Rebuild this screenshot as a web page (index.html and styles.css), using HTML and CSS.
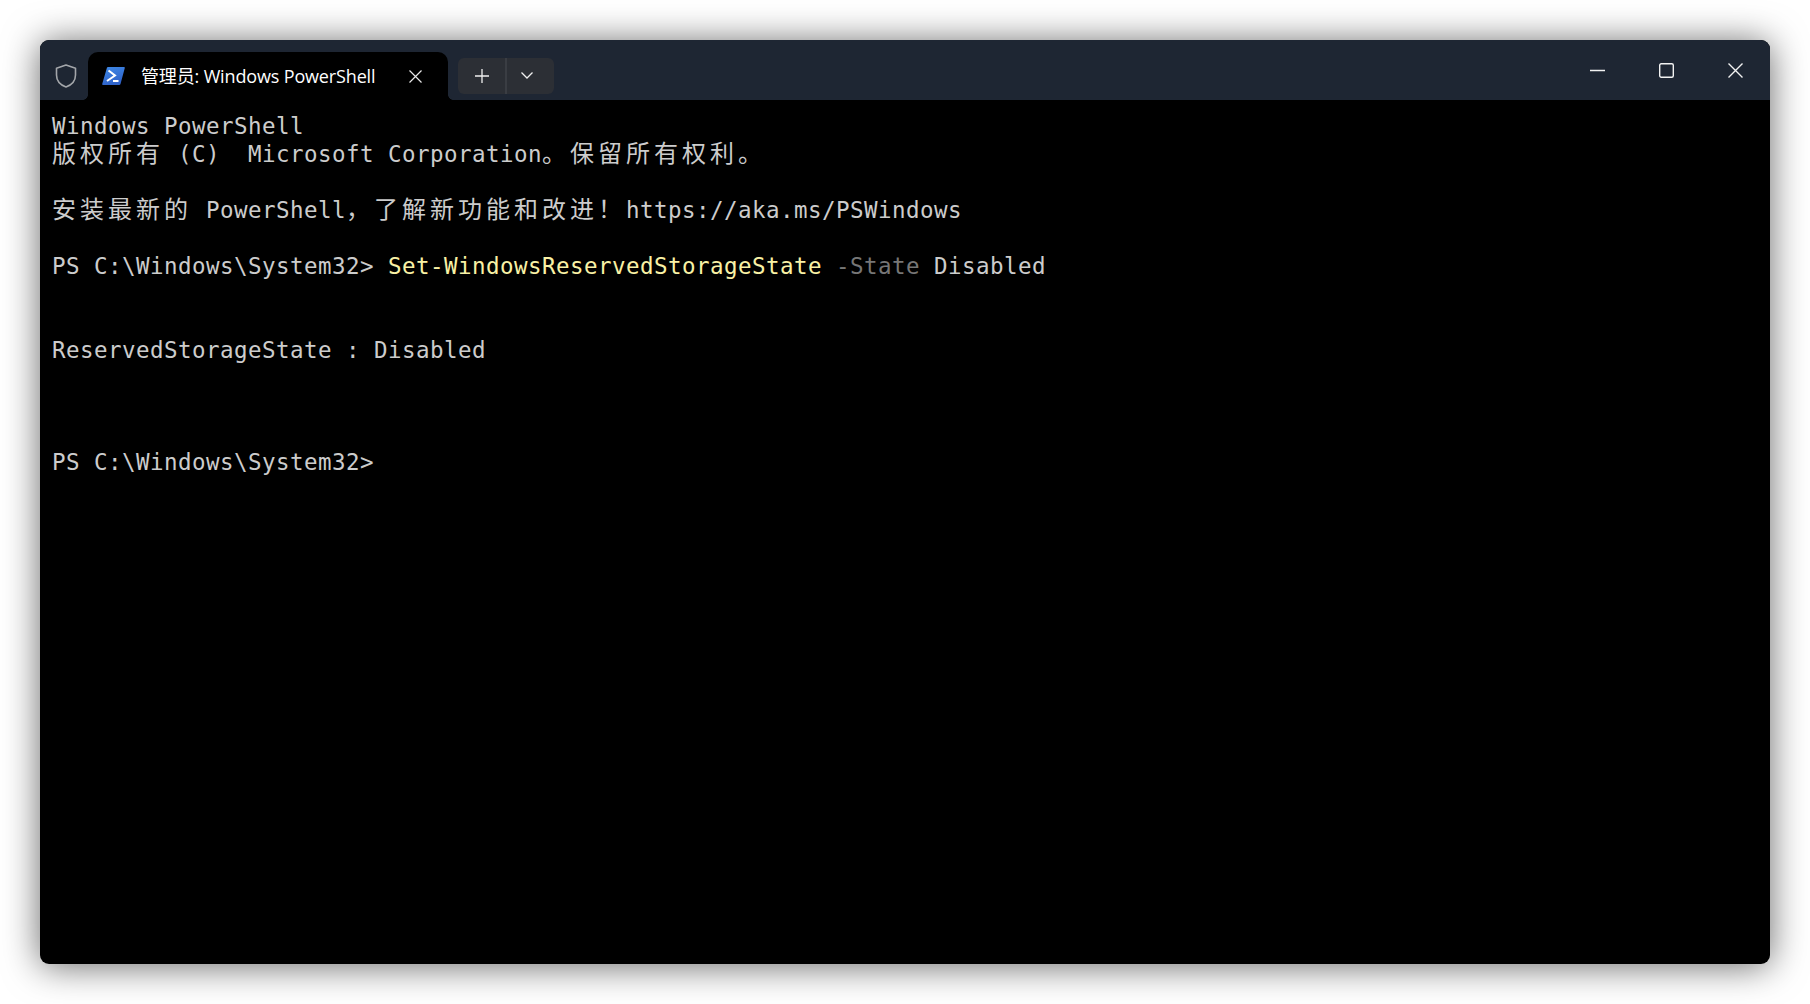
FILE: index.html
```html
<!DOCTYPE html>
<html lang="zh">
<head>
<meta charset="utf-8">
<title>管理员: Windows PowerShell</title>
<link rel="stylesheet" href="styles.css">
</head>
<body>
<div class="window">
  <div class="titlebar">
    <svg class="shield" width="22" height="24" viewBox="0 0 22 24"><path d="M11 1 L20.5 4.3 V11 C20.5 17 16.5 21 11 23 C5.5 21 1.5 17 1.5 11 V4.3 Z" fill="none" stroke="#a3a6aa" stroke-width="1.6" stroke-linejoin="round"/></svg>
    <div class="tab">
      <svg class="ps-icon" width="23" height="18" viewBox="0 0 23 18"><defs><linearGradient id="psg" x1="0" y1="0" x2="0.4" y2="1"><stop offset="0" stop-color="#3f8ae8"/><stop offset="1" stop-color="#2f62c8"/></linearGradient></defs><path d="M5 0.5 Q5.300 0 6 0 H22 Q23 0 22.800 1 L18.500 17 Q18.300 18 17 18 H1 Q0 18 0.200 17 Z" fill="url(#psg)"/><path d="M6.500 3.500 L13 8.500 L5 14" fill="none" stroke="#fff" stroke-width="2"/><path d="M11 14 H16.500" fill="none" stroke="#fff" stroke-width="2"/></svg>
      <span class="tab-title">管理员: Windows PowerShell</span>
      <svg class="tab-close" width="13" height="13" viewBox="0 0 13 13"><path d="M0.500 0.500 L12.500 12.500 M12.500 0.500 L0.500 12.500" stroke="#e8e8e8" stroke-width="1.200" fill="none"/></svg>
    </div>
    <div class="tab-actions">
      <div class="action action-new"><svg width="14" height="14" viewBox="0 0 14 14"><path d="M7 0 V14 M0 7 H14" stroke="#f0f0f0" stroke-width="1.300" fill="none"/></svg></div>
      <div class="action action-menu"><svg width="12" height="7" viewBox="0 0 12 7"><path d="M0.500 0.500 L6 6 L11.500 0.500" stroke="#f0f0f0" stroke-width="1.300" fill="none"/></svg></div>
    </div>
    <div class="controls">
      <div class="control"><svg width="15" height="15" viewBox="0 0 15 15"><path d="M0 7.500 H15" stroke="#f2f2f2" stroke-width="1.400" fill="none"/></svg></div>
      <div class="control"><svg width="15" height="15" viewBox="0 0 15 15"><rect x="0.700" y="0.700" width="13.600" height="13.600" rx="1.500" stroke="#f2f2f2" stroke-width="1.400" fill="none"/></svg></div>
      <div class="control"><svg width="15" height="15" viewBox="0 0 15 15"><path d="M0.500 0.500 L14.500 14.500 M14.500 0.500 L0.500 14.500" stroke="#f2f2f2" stroke-width="1.400" fill="none"/></svg></div>
    </div>
  </div>
  <div class="terminal">
    <div class="line">Windows PowerShell</div>
    <div class="line"><span class="cjk">版权所有</span> (C)  Microsoft Corporation<span class="cjk">。保留所有权利。</span></div>
    <div class="line"> </div>
    <div class="line"><span class="cjk">安装最新的</span> PowerShell<span class="cjk">，了解新功能和改进！</span>https://aka.ms/PSWindows</div>
    <div class="line"> </div>
    <div class="line">PS C:\Windows\System32&gt; <span class="cmd">Set-WindowsReservedStorageState</span> <span class="param">-State</span> Disabled</div>
    <div class="line"> </div>
    <div class="line"> </div>
    <div class="line">ReservedStorageState : Disabled</div>
    <div class="line"> </div>
    <div class="line"> </div>
    <div class="line"> </div>
    <div class="line">PS C:\Windows\System32&gt;</div>
  </div>
</div>
</body>
</html>
```
FILE: styles.css
```css
html, body {
  margin: 0;
  padding: 0;
  background: #fff;
}
body {
  width: 1810px;
  height: 1004px;
  padding: 40px;
  box-sizing: border-box;
  overflow: hidden;
}
.window {
  width: 1730px;
  height: 924px;
  border-radius: 9px;
  background: #000;
  overflow: clip;
  display: flex;
  flex-direction: column;
  box-shadow: 0 2px 36px rgba(0, 0, 0, 0.6);
}
.titlebar {
  height: 60px;
  flex: none;
  background: #1e2633;
  display: flex;
  align-items: flex-end;
}
.shield {
  flex: none;
  margin: 0 11px 12px 15px;
}
.tab {
  position: relative;
  width: 360px;
  height: 48px;
  flex: none;
  box-sizing: border-box;
  background: #000;
  border-radius: 10px 10px 0 0;
  display: flex;
  align-items: center;
  padding-left: 14px;
}
.tab::before,
.tab::after {
  content: "";
  position: absolute;
  bottom: 0;
  width: 5px;
  height: 5px;
}
.tab::before {
  left: -5px;
  background: radial-gradient(circle at 0 0, transparent 4.5px, #000 5px);
}
.tab::after {
  right: -5px;
  background: radial-gradient(circle at 100% 0, transparent 4.5px, #000 5px);
}
.ps-icon {
  flex: none;
}
.tab-title {
  margin-left: 16px;
  flex: none;
  color: #fff;
  font: 18px/24px "Open Sans", "Noto Sans CJK SC", sans-serif;
  letter-spacing: -0.150px;
  white-space: nowrap;
}
.tab-close {
  flex: none;
  margin-left: auto;
  margin-right: 26px;
}
.tab-actions {
  display: flex;
  height: 36px;
  margin: 0 0 6px 10px;
  background: #2c2f35;
  border-radius: 6px;
  overflow: hidden;
  flex: none;
}
.action {
  display: flex;
  align-items: center;
  justify-content: center;
  padding-bottom: 1px;
  box-sizing: border-box;
}
.action-new {
  width: 49px;
  border-right: 2px solid #3a3d43;
}
.action-menu {
  width: 47px;
  padding-right: 8px;
}
.controls {
  margin-left: auto;
  display: flex;
  align-self: flex-start;
}
.control {
  width: 69px;
  height: 46px;
  display: flex;
  align-items: flex-end;
  justify-content: center;
  padding-bottom: 8px;
  box-sizing: border-box;
}
.terminal {
  flex: 1;
  padding: 12px 0 0 12px;
  font-family: "DejaVu Sans Mono", "Noto Sans CJK SC", monospace;
  font-size: 22.500px;
  letter-spacing: 0.455px;
  line-height: 28px;
  color: #ccc;
}
.line {
  height: 28px;
  white-space: pre;
}
.cjk {
  font-family: "Noto Sans CJK SC", sans-serif;
  font-size: 24px;
  letter-spacing: 4px;
  line-height: 0;
}
.cmd {
  color: #f9f1a5;
}
.param {
  color: #767676;
}
```
